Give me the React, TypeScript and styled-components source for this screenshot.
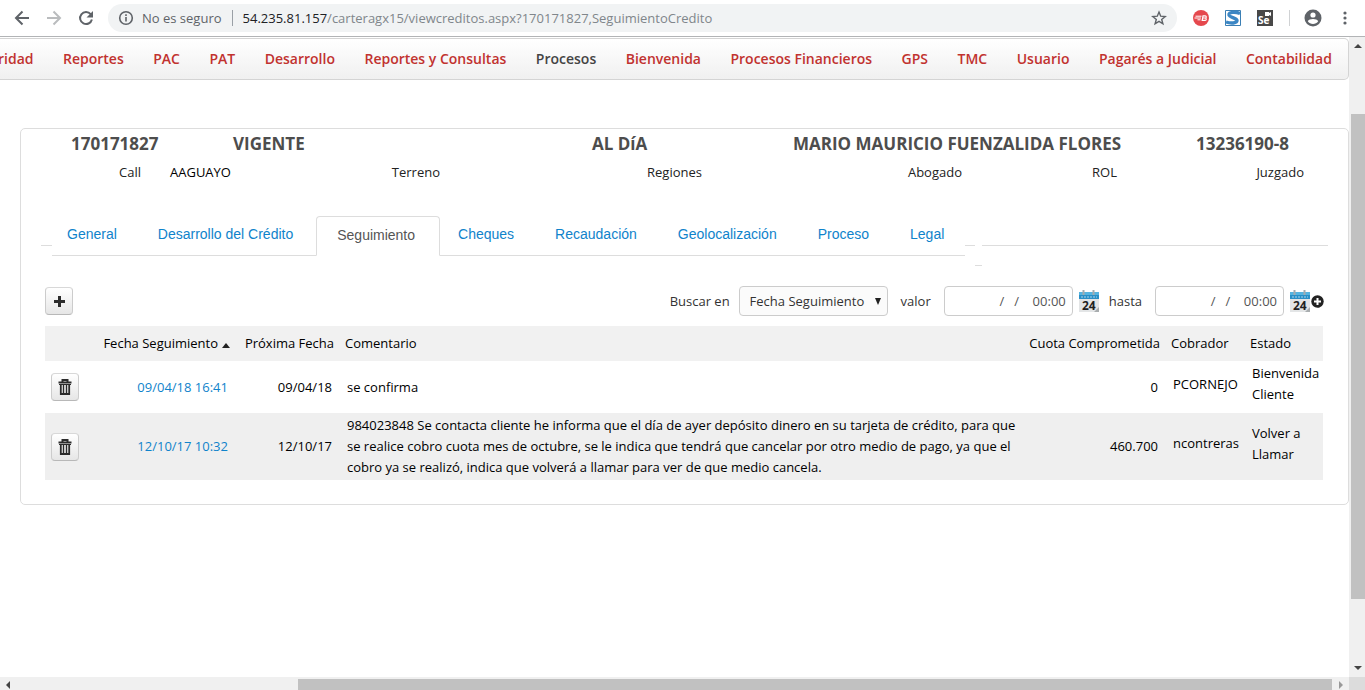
import React from "react";
import styled, { createGlobalStyle, css } from "styled-components";

const GlobalStyle = createGlobalStyle`
  *, *::before, *::after { box-sizing: border-box; }
  body { margin: 0; background: #fff; color: #000; font: 13px/21px "Open Sans", "Noto Sans", sans-serif; }
  button, input, select { font: inherit; color: inherit; }
  a { text-decoration: none; }
`;

const Window = styled.div`
  display: flex;
  flex-direction: column;
  height: 100vh;
  overflow: hidden;
`;

/* Browser bar */

const BrowserBar = styled.header`
  display: flex;
  align-items: center;
  flex: none;
  height: 37px;
  padding: 0 18px 0 14px;
  border-bottom: 1px solid #b2b4b6;
  color: #5f6368;
`;

const BarButton = styled.button<{ $dim?: boolean; $gap?: number }>`
  display: flex;
  flex: none;
  margin-right: ${(p) => p.$gap ?? 16}px;
  padding: 0;
  border: 0;
  background: none;
  color: ${(p) => (p.$dim ? "#babcbe" : "#5f6368")};
`;

const AddressBar = styled.div`
  display: flex;
  align-items: center;
  flex: 1;
  min-width: 0;
  height: 28px;
  margin-right: 16px;
  padding: 0 10px;
  border-radius: 14px;
  background: #f1f3f4;
`;

const Security = styled.span`
  margin-left: 8px;
  padding-right: 10px;
  border-right: 1px solid #9aa0a6;
  line-height: 16px;
  white-space: nowrap;
`;

const Address = styled.span`
  flex: 1;
  margin-left: 10px;
  overflow: hidden;
  color: #80868b;
  white-space: nowrap;
  b { color: #202124; font-weight: 400; }
`;

const Extensions = styled.div`
  display: flex;
  align-items: center;
  gap: 16px;
  margin-right: 14px;
  padding-right: 16px;
  border-right: 1px solid #d0d2d4;
  svg { display: block; }
`;

/* Page and its scroll bars */

const Viewport = styled.div`
  display: grid;
  grid-template-columns: minmax(0, 1fr) 16px;
  grid-template-rows: minmax(0, 1fr) 13px;
  flex: 1;
  min-height: 0;
`;

const Page = styled.main`
  min-width: 0;
  padding-top: 1px;
  overflow: hidden;
`;

const VerticalScroll = styled.div`
  display: flex;
  flex-direction: column;
  align-items: center;
  padding: 7px 0 7px 2px;
  background: #f0f0f0;
  svg { flex: none; }
`;

const VerticalThumb = styled.div`
  flex: 1;
  width: 100%;
  margin: 66px 0 67px;
  background: #c1c1c1;
`;

const HorizontalScroll = styled.div`
  display: flex;
  align-items: center;
  padding: 2px 6px 0;
  background: #f0f0f0;
  svg { flex: none; }
`;

const HorizontalTrack = styled.div`
  display: grid;
  grid-template-columns: 288fr 1034fr;
  flex: 1;
  align-self: stretch;
  margin-right: 7px;
`;

const HorizontalThumb = styled.div`
  grid-column: 2;
  background: #c1c1c1;
`;

const ScrollCorner = styled.div`
  background: #dcdcdc;
`;

/* Menu */

const Menu = styled.nav`
  display: flex;
  align-items: center;
  justify-content: space-between;
  height: 42px;
  margin-left: -2px;
  padding: 0 16px 2px 0;
  border: 1px solid #d4d4d4;
  border-left: 0;
  border-radius: 0 5px 5px 0;
  background: linear-gradient(#fff, #f0f0f0);
  font-size: 14px;
  font-weight: 600;
`;

const MenuLink = styled.a<{ $current?: boolean }>`
  color: ${(p) => (p.$current ? "#444" : "#c1322f")};
  white-space: nowrap;
`;

/* Credit card */

const Card = styled.section`
  margin: 48px 0 0 20px;
  padding-bottom: 24px;
  border: 1px solid #ddd;
  border-radius: 5px;
`;

const Summary = styled.div`
  display: grid;
  grid-template-columns: 162fr 359fr 201fr 403fr 152fr;
  padding: 4px 0 0 50px;
  color: #4d4d4d;
  font: 700 17px/22px "Open Sans", sans-serif;
  white-space: nowrap;
`;

const Assignments = styled.div`
  display: grid;
  grid-template-columns: 120fr 299fr 262fr 260fr 155fr 187fr 44fr;
  margin-top: 7px;
`;

const Assignment = styled.div`
  display: flex;
  justify-content: space-between;
  color: #222;
  font-weight: 500;
  span:only-child { margin-left: auto; }
`;

const Assigned = styled.span`
  padding-left: 29px;
  color: #000;
`;

/* Tabs */

const TabStrip = styled.div`
  display: flex;
  height: 40px;
  margin: 33px 20px 0;
  font: 14px/20px "Liberation Sans", Arial, sans-serif;
`;

const Rule = styled.span<{ $width?: number; $drop?: boolean }>`
  flex: ${(p) => (p.$width ? `0 0 ${p.$width}px` : "1")};
  height: ${(p) => (p.$drop ? 50 : 30)}px;
  border-bottom: 1px solid #ddd;
`;

const Tabs = styled.div`
  display: flex;
  padding: 0 21px 0 15px;
  border-bottom: 1px solid #ddd;
`;

const Tab = styled.a<{ $active?: boolean }>`
  height: 40px;
  margin-right: 41px;
  padding-top: 8px;
  color: #0f83cb;
  white-space: nowrap;
  &:last-child { margin-right: 0; }
  ${(p) =>
    p.$active &&
    css`
      margin-left: -18px;
      margin-right: 18px;
      padding: 8px 24px 0 20px;
      border: 1px solid #ddd;
      border-bottom-color: #fff;
      border-radius: 4px 4px 0 0;
      background: #fff;
      color: #555;
    `}
`;

/* Search tools */

const Tools = styled.form`
  display: flex;
  align-items: center;
  margin: 30px 24px 10px;
  color: #333;
`;

const IconButton = styled.button`
  display: flex;
  align-items: center;
  justify-content: center;
  width: 28px;
  height: 28px;
  padding: 0;
  border: 1px solid #c8c8c8;
  border-color: #d8d8d8 #ccc #b8b8b8;
  border-radius: 4px;
  background: linear-gradient(#fff, #e6e6e6);
  color: #2b2b2b;
`;

const Search = styled.div`
  display: flex;
  align-items: center;
  margin-left: auto;
  white-space: nowrap;
`;

const SelectBox = styled.div`
  display: grid;
  align-items: center;
  width: 149px;
  margin: 0 13px 0 9px;
  svg { grid-area: 1 / 1; justify-self: end; margin-right: 6px; pointer-events: none; }
`;

const Select = styled.select`
  grid-area: 1 / 1;
  width: 100%;
  height: 30px;
  padding: 0 20px 0 10px;
  border: 1px solid #ccc;
  border-radius: 4px;
  background: #fbfbfb;
  appearance: none;
`;

const DateInput = styled.input`
  width: 129px;
  height: 30px;
  margin: 0 5px 0 13px;
  padding: 0 6px;
  border: 1px solid #ccc;
  border-radius: 4px;
  background: #fff;
  color: #555;
  text-align: right;
`;

const PlainButton = styled.button`
  display: flex;
  padding: 0;
  border: 0;
  background: none;
`;

const UntilLabel = styled.label`
  margin-left: 9px;
`;

/* Records */

const Records = styled.table`
  width: calc(100% - 49px);
  margin-left: 24px;
  border-collapse: collapse;
  table-layout: fixed;
`;

const Column = styled.col<{ $width?: number }>`
  width: ${(p) => (p.$width ? `${p.$width}px` : "auto")};
`;

const HeadCell = styled.th<{ $right?: boolean }>`
  height: 35px;
  padding: 0 5px 0 6px;
  background: #f1f1f1;
  font-weight: 500;
  text-align: ${(p) => (p.$right ? "right" : "left")};
  white-space: nowrap;
  svg { margin-left: 4px; }
`;

const Row = styled.tr<{ $shaded?: boolean }>`
  background: ${(p) => (p.$shaded ? "#efefef" : "#fff")};
`;

const Cell = styled.td<{ $raised?: boolean }>`
  padding: ${(p) => (p.$raised ? "2px 0 8px 8px" : "2px 4px 2px 8px")};
  vertical-align: middle;
`;

const FigureCell = styled(Cell)`
  padding-right: 7px;
  text-align: right;
  a { color: #0f83cb; }
`;

const ActionCell = styled(Cell)`
  padding: 0 0 0 6px;
`;

const menu = [
  "ridad", "Reportes", "PAC", "PAT", "Desarrollo", "Reportes y Consultas", "Procesos", "Bienvenida",
  "Procesos Financieros", "GPS", "TMC", "Usuario", "Pagarés a Judicial", "Contabilidad",
];

const summary = ["170171827", "VIGENTE", "AL DíA", "MARIO MAURICIO FUENZALIDA FLORES", "13236190-8"];

const assignments = [
  { label: "Call" },
  { value: "AAGUAYO", label: "Terreno" },
  { label: "Regiones" },
  { label: "Abogado" },
  { label: "ROL" },
  { label: "Juzgado" },
];

const tabs = [
  "General", "Desarrollo del Crédito", "Seguimiento", "Cheques", "Recaudación", "Geolocalización", "Proceso", "Legal",
];

const records = [
  {
    date: "09/04/18 16:41", next: "09/04/18", comment: "se confirma",
    amount: "0", collector: "PCORNEJO", status: "Bienvenida Cliente",
  },
  {
    date: "12/10/17 10:32", next: "12/10/17",
    comment:
      "984023848 Se contacta cliente he informa que el día de ayer depósito dinero en su tarjeta de crédito, para que se realice cobro cuota mes de octubre, se le indica que tendrá que cancelar por otro medio de pago, ya que el cobro ya se realizó, indica que volverá a llamar para ver de que medio cancela.",
    amount: "460.700", collector: "ncontreras", status: "Volver a Llamar",
  },
];

const Arrow = ({ back }: { back?: boolean }) => (
  <svg width="16" height="16" viewBox="0 0 16 16" fill="none" stroke="currentColor" strokeWidth="2">
    <path d={back ? "M15 8H2.5M8.5 1.5L2 8l6.500 6.500" : "M1 8h12.500M7.500 1.500L14 8l-6.500 6.500"} />
  </svg>
);

const Reload = () => (
  <svg width="16" height="16" viewBox="0 0 16 16">
    <path d="M12.700 4.200A6 6 0 1 0 13.900 9.500" fill="none" stroke="currentColor" strokeWidth="2" />
    <path d="M15 1v6.500H8.500z" fill="currentColor" />
  </svg>
);

const Info = () => (
  <svg width="16" height="16" viewBox="0 0 16 16" fill="none" stroke="currentColor" strokeWidth="1.600">
    <circle cx="8" cy="8" r="6.300" />
    <path d="M8 7v4.500M8 4.300v1.700" />
  </svg>
);

const Star = () => (
  <svg width="16" height="16" viewBox="0 0 16 16" fill="none" stroke="currentColor" strokeWidth="1.400">
    <path d="M8 2l1.700 4.200 4.500.3-3.500 2.900 1.200 4.400L8 11.400l-3.900 2.400 1.200-4.400L1.800 6.500l4.500-.3z" />
  </svg>
);

const BlazeLogo = () => (
  <svg width="16" height="16" viewBox="0 0 16 16">
    <circle cx="8" cy="8" r="8" fill="#e5484d" />
    <path d="M2.500 6.200H8.500M1.500 8H8M4.500 9.800H7.500" stroke="#fff" strokeWidth="1" />
    <path d="M10 5.800h2.200a1 1 0 0 1 0 2.200H9.700h2.400a1.100 1.100 0 0 1 0 2.300H9.200z" fill="none" stroke="#fff" strokeWidth="1.200" />
  </svg>
);

const WaveLogo = () => (
  <svg width="16" height="16" viewBox="0 0 16 16">
    <path d="M.5.500h15v15H.5z" fill="#fff" stroke="#3b7fb4" />
    <path d="M15 3.500C10 1.500 3.500 2 4 5c.5 2.600 8 2.600 8 5.600 0 2.600-6 3.200-11 1.400" fill="none" stroke="#3b86c4" strokeWidth="3.400" />
  </svg>
);

const SeleniumLogo = () => (
  <svg width="16" height="16" viewBox="0 0 16 16">
    <path fill="#484848" d="M0 0h16v16H0z" />
    <path fill="#fff" d="M8 2h4v1l2-1v4l-2-1v1H8z" />
    <text x="1" y="14" fill="#fff" fontFamily="Open Sans" fontSize="10" fontWeight="700">Se</text>
  </svg>
);

const Profile = () => (
  <svg width="18" height="18" viewBox="0 0 18 18">
    <circle cx="9" cy="9" r="8.500" fill="currentColor" />
    <circle cx="9" cy="6" r="2.600" fill="#fff" />
    <path d="M3.800 12.300c1.200-3 9.200-3 10.400 0-2.400 3.600-8 3.600-10.400 0z" fill="#fff" />
  </svg>
);

const More = () => (
  <svg width="4" height="14" viewBox="0 0 4 14" fill="currentColor">
    <circle cx="2" cy="2" r="1.600" /><circle cx="2" cy="7" r="1.600" /><circle cx="2" cy="12" r="1.600" />
  </svg>
);

const Plus = () => (
  <svg width="11" height="11" viewBox="0 0 11 11"><path d="M5.500 0v11M0 5.500h11" stroke="currentColor" strokeWidth="3" /></svg>
);

const Trash = () => (
  <svg width="14" height="16" viewBox="0 0 14 16" fill="none" stroke="currentColor">
    <path d="M.5 3.500h13M4.500 2.500V1h5v1.500" strokeWidth="2" />
    <path d="M1 5.500h12" strokeWidth="1" />
    <path d="M2.800 6v9h8.400V6" strokeWidth="1.800" />
    <path d="M5.500 6v9M8.500 6v9" strokeWidth="1.400" />
  </svg>
);

const Calendar = () => (
  <svg width="22" height="24" viewBox="0 0 22 24">
    <path d="M1 10h20v13H1z" fill="#e3e5e6" />
    <path d="M1 3h20v7H1z" fill="#55b4e0" />
    <path d="M1 6h20v4H1z" fill="#2a8fc6" />
    <path d="M3 8h16" stroke="#a5d4ec" strokeDasharray="2 1" />
    <path d="M5.500 1v5M15.500 1v5" stroke="#a3abb0" strokeWidth="2" />
    <path d="M21 18v5h-5z" fill="#a9adaf" />
    <text x="4" y="21" fill="#222" fontFamily="Open Sans" fontSize="12" fontWeight="700">24</text>
  </svg>
);

const CirclePlus = () => (
  <svg width="13" height="13" viewBox="0 0 13 13">
    <circle cx="6.500" cy="6.500" r="6.200" fill="#222" />
    <path d="M6.500 3v7M3 6.500h7" stroke="#fff" strokeWidth="2" />
  </svg>
);

const Triangle = ({ d, w, h, fill = "#444" }: { d: string; w: number; h: number; fill?: string }) => (
  <svg width={w} height={h} viewBox={`0 0 ${w} ${h}`}><path d={d} fill={fill} /></svg>
);

export default function App() {
  return (
    <Window>
      <GlobalStyle />
      <BrowserBar>
        <BarButton aria-label="Atrás"><Arrow back /></BarButton>
        <BarButton $dim aria-label="Adelante"><Arrow /></BarButton>
        <BarButton $gap={14} aria-label="Recargar"><Reload /></BarButton>
        <AddressBar>
          <Info />
          <Security>No es seguro</Security>
          <Address><b>54.235.81.157</b>/carteragx15/viewcreditos.aspx?170171827,SeguimientoCredito</Address>
          <Star />
        </AddressBar>
        <Extensions><BlazeLogo /><WaveLogo /><SeleniumLogo /></Extensions>
        <BarButton $gap={21} aria-label="Perfil"><Profile /></BarButton>
        <PlainButton aria-label="Más"><More /></PlainButton>
      </BrowserBar>
      <Viewport>
        <Page>
          <Menu>
            {menu.map((item) => (
              <MenuLink key={item} href="#" $current={item === "Procesos"}>{item}</MenuLink>
            ))}
          </Menu>
          <Card>
            <Summary>{summary.map((text) => <span key={text}>{text}</span>)}</Summary>
            <Assignments>
              {assignments.map(({ label, value }) => (
                <Assignment key={label}>
                  {value && <Assigned>{value}</Assigned>}
                  <span>{label}</span>
                </Assignment>
              ))}
            </Assignments>
            <TabStrip>
              <Rule $width={11} />
              <Tabs>
                {tabs.map((tab) => (
                  <Tab key={tab} href="#" $active={tab === "Seguimiento"}>{tab}</Tab>
                ))}
              </Tabs>
              <Rule $width={10} />
              <Rule $width={7} $drop />
              <Rule />
            </TabStrip>
            <Tools>
              <IconButton type="button" aria-label="Agregar"><Plus /></IconButton>
              <Search>
                <label htmlFor="field">Buscar en</label>
                <SelectBox>
                  <Select id="field"><option>Fecha Seguimiento</option></Select>
                  <Triangle w={8} h={7} d="M1 0h6L4 7z" fill="#222" />
                </SelectBox>
                <label htmlFor="from">valor</label>
                <DateInput id="from" defaultValue="/   /    00:00" />
                <PlainButton type="button" aria-label="Calendario desde"><Calendar /></PlainButton>
                <UntilLabel htmlFor="to">hasta</UntilLabel>
                <DateInput id="to" defaultValue="/   /    00:00" />
                <PlainButton type="button" aria-label="Calendario hasta"><Calendar /></PlainButton>
                <PlainButton type="button" aria-label="Agregar filtro"><CirclePlus /></PlainButton>
              </Search>
            </Tools>
            <Records>
              <colgroup>
                <Column $width={51} /><Column $width={139} /><Column $width={104} /><Column />
                <Column $width={143} /><Column $width={79} /><Column $width={79} />
              </colgroup>
              <thead>
                <tr>
                  <HeadCell />
                  <HeadCell $right>Fecha Seguimiento<Triangle w={8} h={5} d="M4 0l4 5H0z" fill="#222" /></HeadCell>
                  <HeadCell $right>Próxima Fecha</HeadCell>
                  <HeadCell>Comentario</HeadCell>
                  <HeadCell $right>Cuota Comprometida</HeadCell>
                  <HeadCell>Cobrador</HeadCell>
                  <HeadCell>Estado</HeadCell>
                </tr>
              </thead>
              <tbody>
                {records.map((r, i) => (
                  <Row key={r.date} $shaded={i % 2 === 1}>
                    <ActionCell><IconButton aria-label="Eliminar"><Trash /></IconButton></ActionCell>
                    <FigureCell><a href="#">{r.date}</a></FigureCell>
                    <FigureCell>{r.next}</FigureCell>
                    <Cell>{r.comment}</Cell>
                    <FigureCell>{r.amount}</FigureCell>
                    <Cell $raised>{r.collector}</Cell>
                    <Cell $raised>{r.status}</Cell>
                  </Row>
                ))}
              </tbody>
            </Records>
          </Card>
        </Page>
        <VerticalScroll>
          <Triangle w={8} h={4} d="M4 0l4 4H0z" />
          <VerticalThumb />
          <Triangle w={8} h={4} d="M0 0h8L4 4z" />
        </VerticalScroll>
        <HorizontalScroll>
          <Triangle w={4} h={8} d="M4 0v8L0 4z" />
          <HorizontalTrack><HorizontalThumb /></HorizontalTrack>
          <Triangle w={4} h={8} d="M0 0v8l4-4z" fill="#999" />
        </HorizontalScroll>
        <ScrollCorner />
      </Viewport>
    </Window>
  );
}
